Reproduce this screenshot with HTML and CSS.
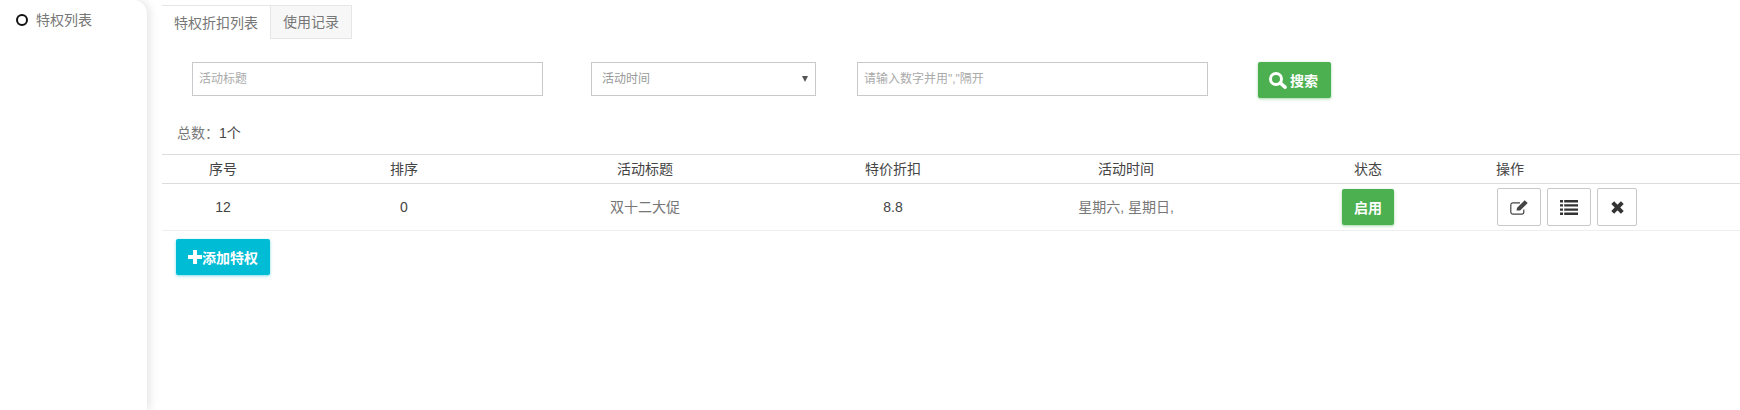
FILE: index.html
```html
<!DOCTYPE html>
<html lang="zh">
<head>
<meta charset="utf-8">
<title>特权列表</title>
<link rel="stylesheet" href="styles.css">
</head>
<body>
<div class="page">
  <aside class="side">
    <div class="side-item"><span class="dot"></span><span>特权列表</span></div>
  </aside>
  <main class="main">
    <div class="tabs">
      <div class="tab active">特权折扣列表</div>
      <div class="tab">使用记录</div>
    </div>
    <form class="filters">
      <input class="field f-title" placeholder="活动标题">
      <div class="field f-select"><span class="sel-text">活动时间</span><span class="caret"></span></div>
      <input class="field f-num" placeholder="请输入数字并用&quot;,&quot;隔开">
      <button type="button" class="btn green search">
        <svg class="ic-search" viewBox="0 0 18 17"><circle cx="7" cy="7" r="5.500" fill="none" stroke="#fff" stroke-width="3"/><path d="M11.300 11L16 15.200" stroke="#fff" stroke-width="3.600" stroke-linecap="round"/></svg>搜索
      </button>
    </form>
    <div class="total">总数：<span class="num">1个</span></div>
    <div class="row head">
      <div class="c1">序号</div><div class="c2">排序</div><div class="c3">活动标题</div><div class="c4">特价折扣</div><div class="c5">活动时间</div><div class="c6">状态</div><div class="c7">操作</div>
    </div>
    <div class="row body">
      <div class="c1">12</div><div class="c2">0</div><div class="c3 soft">双十二大促</div><div class="c4">8.8</div><div class="c5 soft">星期六, 星期日,</div>
      <div class="c6"><span class="btn green state">启用</span></div>
      <div class="c7 ops">
        <span class="op w44"><svg viewBox="0 0 18 15" class="ic edit"><path d="M13.800 9.500v2.500a2.200 2.200 0 0 1-2.200 2.200H3A2.200 2.200 0 0 1 .8 12V5A2.200 2.200 0 0 1 3 2.800h7" fill="none" stroke="#444" stroke-width="1.200"/><path d="M6.500 10.500l.6-2.800L14.700.3 17.700 3l-7.600 7.500z" fill="#444"/></svg></span>
        <span class="op w44"><svg viewBox="0 0 18 15" class="ic lst"><path d="M0 0h3v2.400H0zM4.200 0H18v2.400H4.200zM0 4.200h3v2.400H0zM4.200 4.200H18v2.400H4.200zM0 8.400h3v2.400H0zM4.200 8.400H18v2.400H4.200zM0 12.600h3V15H0zM4.200 12.600H18V15H4.200z" fill="#333"/></svg></span>
        <span class="op w40"><svg viewBox="0 0 13 13" class="ic x"><path d="M1.700 1.700l9.600 9.600M11.300 1.700l-9.600 9.600" stroke="#333" stroke-width="4" fill="none"/></svg></span>
      </div>
    </div>
    <button type="button" class="btn cyan add"><svg class="ic-plus" viewBox="0 0 14 14"><path d="M5 0h4v5h5v4H9v5H5V9H0V5h5z" fill="#fff"/></svg>添加特权</button>
  </main>
</div>
</body>
</html>
```
FILE: styles.css
```css
* { box-sizing: border-box; }
html, body { margin: 0; height: 100%; background: #fff; overflow: hidden; }
body { font: 14px/20px "Liberation Sans", "Noto Sans CJK SC", sans-serif; color: #555; }
.page { display: flex; height: 410px; }
.side { width: 147px; flex: none; padding: 10px 16px; background: #fff; border-radius: 0 14px 0 0; box-shadow: 3px 0 8px rgba(0,0,0,.1); }
.side-item { display: flex; align-items: center; gap: 8px; color: #777; }
.dot { width: 12px; height: 12px; border: 2.5px solid #111; border-radius: 50%; }
.main { flex: 1; min-width: 0; padding: 5px 0 0 15px; }
.tabs { display: flex; height: 34px; }
.tab { padding: 6px 12px; width: 82px; border: 1px solid #e6e6e6; background: #f7f7f7; color: #777; }
.tab.active { width: 108px; border: 0; border-top: 1px solid #e6e6e6; background: #fff; padding: 7px 0 0 12px; }
.filters { display: flex; align-items: flex-start; margin-top: 23px; height: 34px; }
.field { height: 34px; border: 1px solid #c9c9c9; background: #fff; font: 12px "Liberation Sans", "Noto Sans CJK SC", sans-serif; color: #999; outline: 0; border-radius: 0; }
.field::placeholder { color: #aaa; opacity: 1; }
.f-title { width: 351px; margin-left: 30px; padding: 0 6px; }
.f-select { width: 225px; margin-left: 48px; padding: 0 7px 0 10px; display: flex; align-items: center; justify-content: space-between; }
.sel-text { line-height: 16px; height: 16px; margin-bottom: 1px; }
.caret { border: 3px solid transparent; border-top: 6px solid #555; border-bottom: 0; }
.f-num { width: 351px; margin-left: 41px; padding: 0 6px; }
.btn { display: inline-flex; align-items: center; justify-content: center; border: 0; border-radius: 2px; color: #fff; font: 700 14px "Liberation Sans", "Noto Sans CJK SC", sans-serif; }
.green { background: #4caf50; box-shadow: 0 1px 3px rgba(76,175,80,.5); }
.cyan { background: #00bcd4; box-shadow: 0 1px 3px rgba(0,188,212,.5); }
.search { width: 73px; height: 36px; margin-left: 50px; gap: 3px; padding: 0 2px 0 0; }
.ic-search { width: 18px; height: 17px; }
.total { margin-top: 27px; padding-left: 15px; height: 19px; color: #777; }
.num { color: #444; }
.row { display: flex; align-items: center; text-align: center; color: #444; }
.head { margin-top: 12px; height: 30px; border-top: 1px solid #ddd; border-bottom: 1px solid #ddd; }
.body { height: 47px; border-bottom: 1px solid #eee; }
.soft { color: #777; }
.c1 { width: 122px; } .c2 { width: 240px; } .c3 { width: 242px; } .c4 { width: 254px; } .c5 { width: 212px; }
.c6 { width: 264px; padding-left: 8px; display: flex; justify-content: center; }
.c7 { flex: 1; text-align: left; }
.ops { display: flex; gap: 6px; padding-left: 1px; }
.op { display: flex; align-items: center; justify-content: center; height: 38px; background: #fff; border: 1px solid #c9c9c9; border-radius: 2px; }
.w44 { width: 44px; } .w40 { width: 40px; }
.ic.edit { width: 18px; height: 15px; }
.ic.lst { width: 18px; height: 15px; }
.ic.x { width: 13px; height: 13px; }
.state { width: 52px; height: 36px; }
.add { width: 94px; height: 36px; margin: 8px 0 0 14px; }
.ic-plus { width: 14px; height: 14px; }
```
